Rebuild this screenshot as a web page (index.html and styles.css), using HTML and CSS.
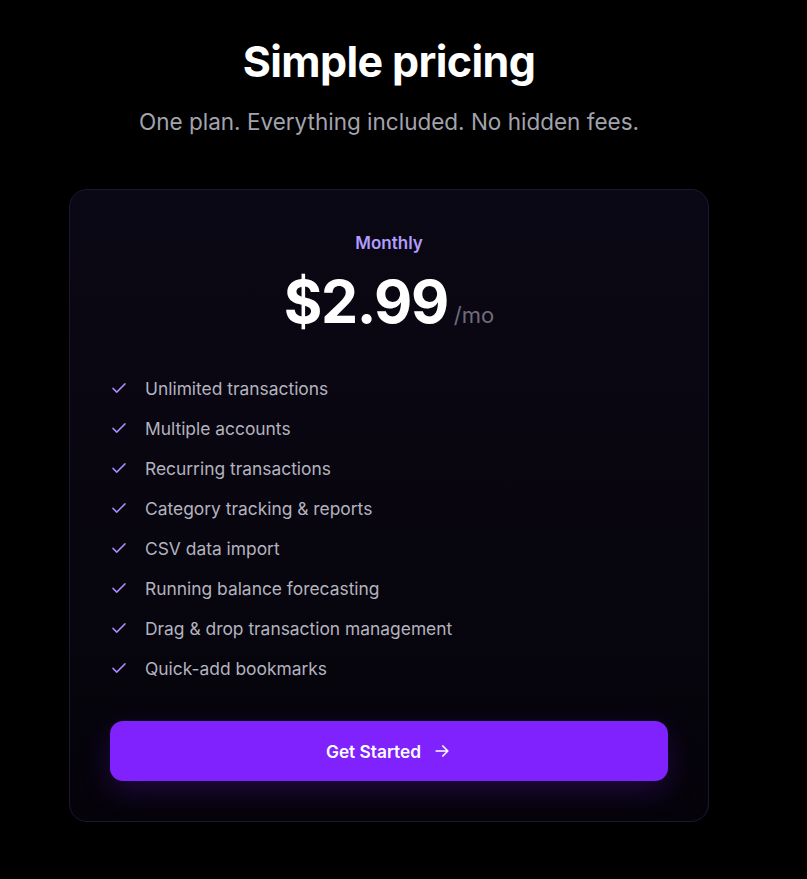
FILE: index.html
```html
<!DOCTYPE html>
<html lang="en">
<head>
<meta charset="utf-8">
<title>Simple pricing</title>
<link rel="stylesheet" href="styles.css">
</head>
<body>
<main class="page">
  <header class="intro">
    <h1 class="title">Simple pricing</h1>
    <p class="subtitle">One plan. Everything included. No hidden fees.</p>
  </header>
  <section class="card">
    <div class="plan">Monthly</div>
    <div class="price"><span class="amount">$2.99</span><span class="period">/mo</span></div>
    <ul class="features">
      <li class="feature"><svg class="check" viewBox="0 0 24 24"><path d="M4 12.5l5 5L20 6.5"/></svg>Unlimited transactions</li>
      <li class="feature"><svg class="check" viewBox="0 0 24 24"><path d="M4 12.5l5 5L20 6.5"/></svg>Multiple accounts</li>
      <li class="feature"><svg class="check" viewBox="0 0 24 24"><path d="M4 12.5l5 5L20 6.5"/></svg>Recurring transactions</li>
      <li class="feature"><svg class="check" viewBox="0 0 24 24"><path d="M4 12.5l5 5L20 6.5"/></svg>Category tracking &amp; reports</li>
      <li class="feature"><svg class="check" viewBox="0 0 24 24"><path d="M4 12.5l5 5L20 6.5"/></svg>CSV data import</li>
      <li class="feature"><svg class="check" viewBox="0 0 24 24"><path d="M4 12.5l5 5L20 6.5"/></svg>Running balance forecasting</li>
      <li class="feature"><svg class="check" viewBox="0 0 24 24"><path d="M4 12.5l5 5L20 6.5"/></svg>Drag &amp; drop transaction management</li>
      <li class="feature"><svg class="check" viewBox="0 0 24 24"><path d="M4 12.5l5 5L20 6.5"/></svg>Quick-add bookmarks</li>
    </ul>
    <a class="cta" href="#">Get Started<svg class="arrow" viewBox="0 0 24 24"><path d="M5 12h14M13 6l6 6-6 6"/></svg></a>
  </section>
</main>
</body>
</html>
```
FILE: styles.css
```css
* { box-sizing: border-box; }
html, body { margin: 0; padding: 0; background: #000; }
body {
  font-family: Inter, "Noto Sans", sans-serif;
  color: #fff;
  min-height: 879px;
}
.page {
  width: 778px;
  display: flex;
  flex-direction: column;
  align-items: center;
  padding-top: 33px;
}
.intro { text-align: center; }
.title {
  margin: 0;
  font-size: 43px;
  line-height: 56px;
  font-weight: 700;
  letter-spacing: -0.6px;
  color: #fff;
}
.subtitle {
  margin: 18px 0 0;
  font-size: 22.5px;
  line-height: 30px;
  color: #a3a3ad;
}
.card {
  margin-top: 52px;
  width: 640px;
  border: 1px solid #1e1733;
  border-radius: 18px;
  background: linear-gradient(180deg, #0b0815 0%, #050309 100%);
  padding: 40px;
  display: flex;
  flex-direction: column;
  align-items: center;
}
.plan {
  font-size: 17px;
  line-height: 26px;
  font-weight: 600;
  color: #b29cfd;
}
.price {
  display: flex;
  align-items: baseline;
  gap: 6px;
  margin-top: 10px;
}
.amount {
  font-size: 59px;
  line-height: 72px;
  font-weight: 700;
  color: #fff;
  letter-spacing: -1.5px;
}
.period {
  font-size: 22px;
  color: #6f6c7c;
}
.features {
  list-style: none;
  margin: 30px 0 0;
  padding: 0;
  align-self: stretch;
  display: flex;
  flex-direction: column;
}
.feature {
  display: flex;
  align-items: center;
  gap: 17px;
  height: 40px;
  font-size: 17.4px;
  color: #b3b3bf;
}
.check {
  width: 18px;
  height: 18px;
  fill: none;
  stroke: #a78bfa;
  stroke-width: 2;
  stroke-linecap: round;
  stroke-linejoin: round;
}
.cta {
  margin-top: 33px;
  align-self: stretch;
  height: 60px;
  border-radius: 13px;
  background: #7f22fe;
  color: #fff;
  text-decoration: none;
  font-size: 17.3px;
  font-weight: 600;
  display: flex;
  align-items: center;
  justify-content: center;
  gap: 11px;
  box-shadow: 0 10px 30px rgba(127, 34, 254, 0.22);
}
.arrow {
  width: 20px;
  height: 20px;
  fill: none;
  stroke: #fff;
  stroke-width: 2;
  stroke-linecap: round;
  stroke-linejoin: round;
}
```
